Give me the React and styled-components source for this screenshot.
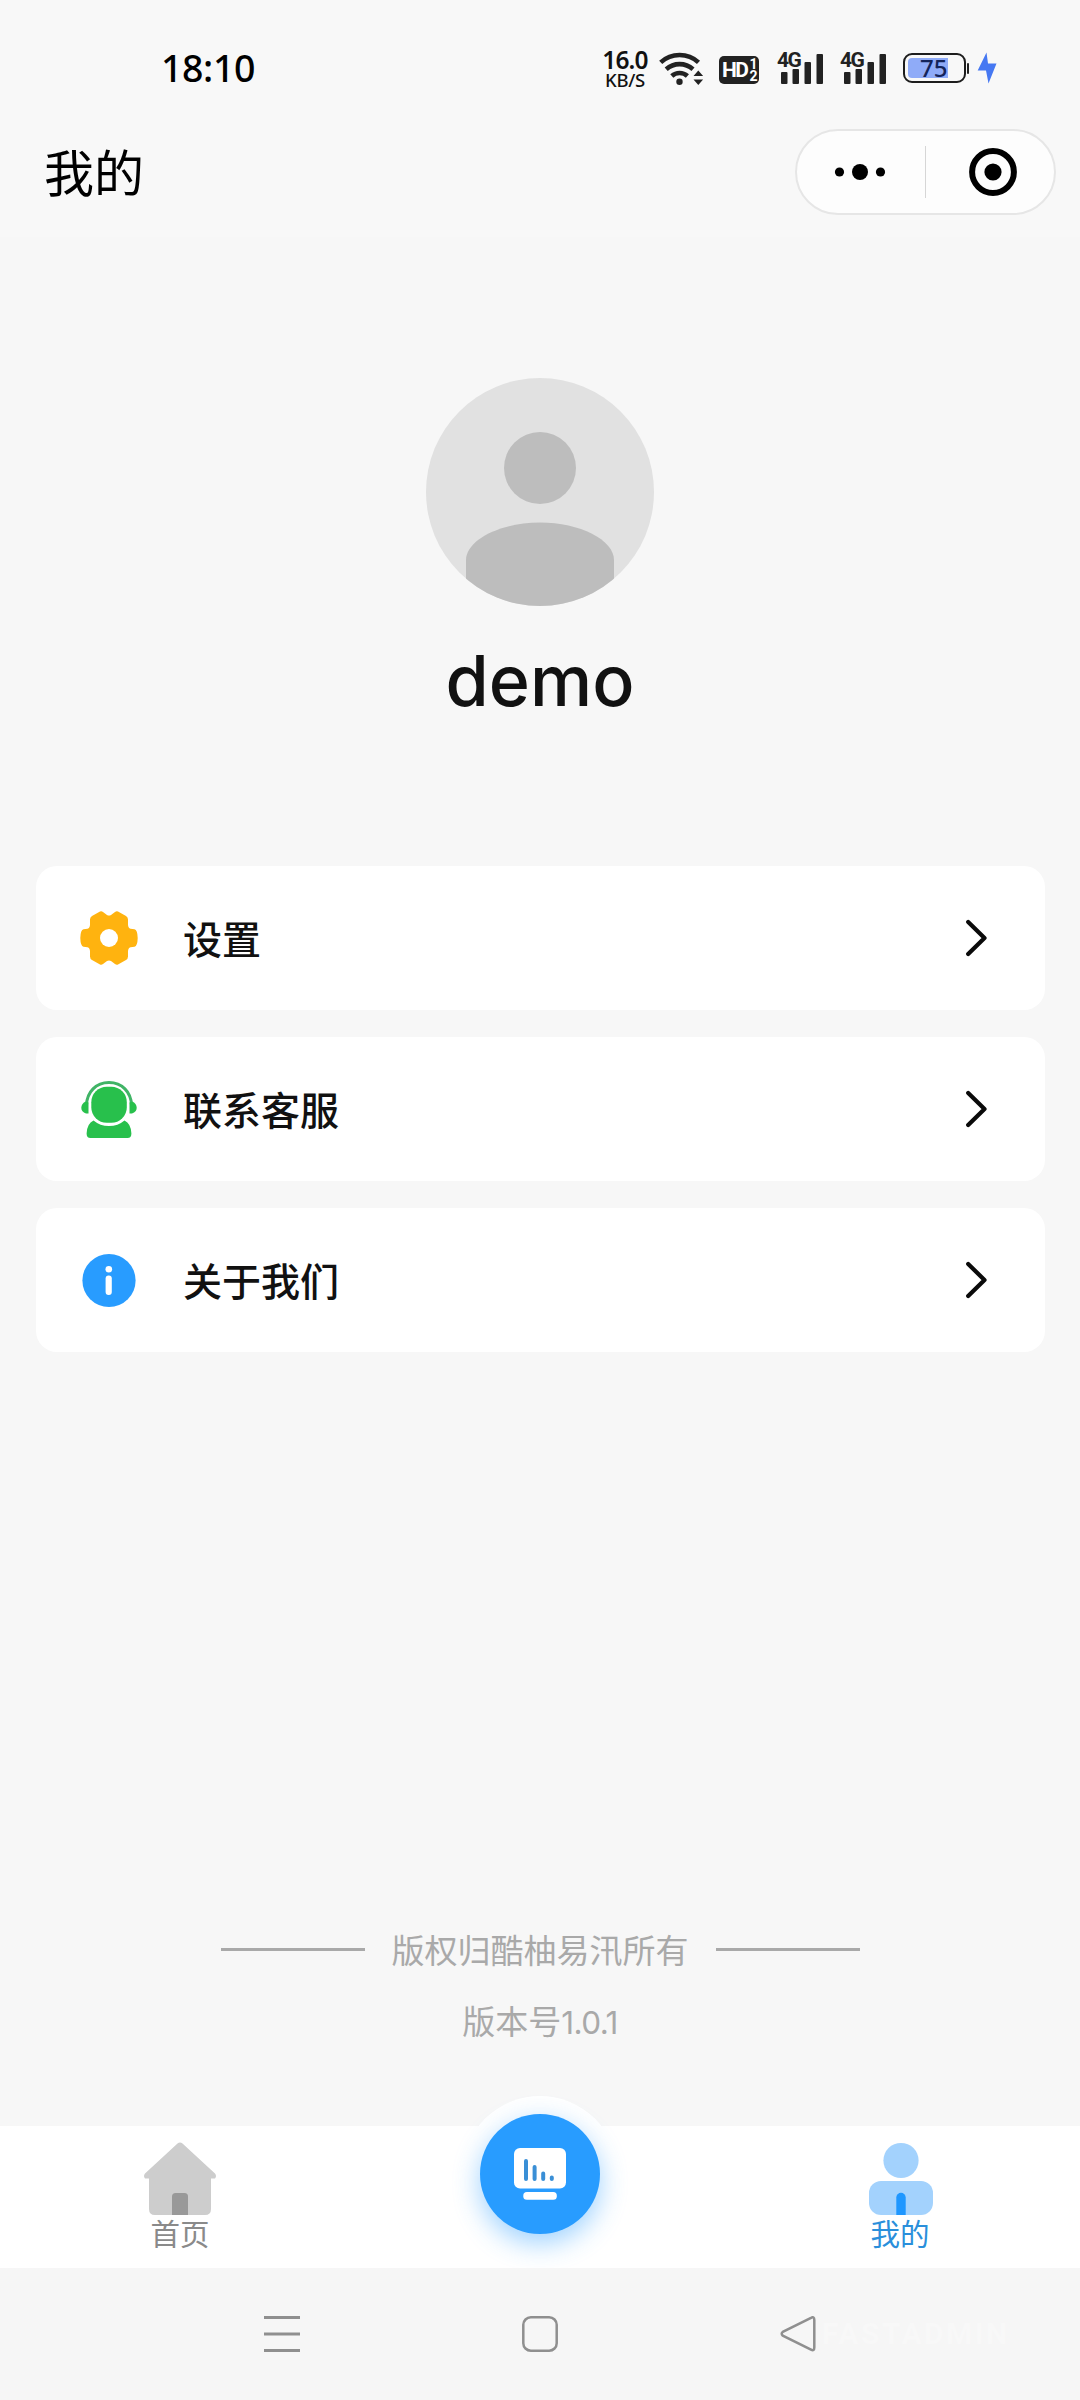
import React from "react";
import styled, { createGlobalStyle } from "styled-components";

const GlobalStyle = createGlobalStyle`
  body {
    margin: 0;
    background: #f7f7f7;
    font-family: "Noto Sans", "Noto Sans CJK SC", sans-serif;
    color: #111;
  }
  svg {
    display: block;
    flex: none;
  }
`;

const WifiIcon = () => (
  <svg width="46" height="36" viewBox="0 0 46 36" fill="none" stroke="#222" strokeWidth="4.6">
    <path d="M1.7 12.4a28 28 0 0 1 37.8 0" />
    <path d="M7.2 19.3a20 20 0 0 1 26.8 0" />
    <path d="M12.8 26a11.600 11.600 0 0 1 15.6 0" />
    <circle cx="20.500" cy="31.700" r="3.200" fill="#222" stroke="none" />
    <path d="M34.500 26l4.800-5.500 4.800 5.500zM34.500 29.500h9.600l-4.800 5.500z" fill="#222" stroke="none" />
  </svg>
);

const Signal = () => (
  <SignalBox>
    <SignalLabel>4G</SignalLabel>
    <svg width="48" height="34" viewBox="0 0 48 34" fill="#222">
      <rect x="4" y="21" width="6.500" height="12" rx="1" />
      <rect x="15.500" y="18" width="6.500" height="15" rx="1" />
      <rect x="27.500" y="11" width="6.500" height="22" rx="1" />
      <rect x="39.500" y="3" width="6.500" height="30" rx="1" />
    </svg>
  </SignalBox>
);

const BoltIcon = () => (
  <svg width="20" height="32" viewBox="0 0 20 32" fill="#4678f2">
    <path d="M9.500 0.500L0.700 18.500h8.300L11.500 31.500 19.500 11.500h-8.500z" />
  </svg>
);

const GearIcon = () => (
  <svg width="60" height="60" viewBox="0 0 60 60">
    <path
      d="M21 3.500Q22.500 2.900 24 3.900L28 6.900Q30 8.100 32 6.900L36 3.900Q37.500 2.900 39 3.500L47 8Q49 9.200 49 11.500V16.500Q49 20 51.500 20.800L55.500 21.300Q58.500 22 58.700 30Q58.500 38 55.500 38.700L51.500 39.200Q49 40 49 43.500V48.500Q49 50.800 47 52L39 56.500Q37.500 57.100 36 56.100L32 53.100Q30 51.900 28 53.100L24 56.100Q22.500 57.100 21 56.500L13 52Q11 50.800 11 48.500V43.500Q11 40 8.500 39.200L4.500 38.700Q1.500 38 1.300 30Q1.500 22 4.500 21.300L8.500 20.800Q11 20 11 16.500V11.500Q11 9.200 13 8Z"
      fill="#ffb30f"
    />
    <circle cx="30" cy="30" r="9" fill="#fff" />
  </svg>
);

const ServiceIcon = () => (
  <svg width="60" height="60" viewBox="0 0 60 60" fill="#28c04c">
    <path d="M7.500 26C8 13 17 3.500 30 3.500S52 13 52.500 26" fill="none" stroke="#40b466" strokeWidth="3" />
    <path d="M9.500 23.500v11H7Q2.300 33 2.300 28.800 2.300 25 6.500 22.500z" />
    <path d="M50.500 23.500v11H53Q57.700 33 57.700 28.800 57.700 25 53.500 22.500z" />
    <rect x="12.300" y="7.700" width="35.500" height="36" rx="15.500" />
    <path d="M14.500 41.500Q21 47 30 47T45.500 41.500Q52 44.500 52.400 54.500 52.400 59 48.500 59H11.500Q7.600 59 7.600 54.500 8 44.500 14.500 41.500z" />
  </svg>
);

const InfoIcon = () => (
  <svg width="60" height="60" viewBox="0 0 60 60">
    <circle cx="30" cy="30.500" r="26.600" fill="#289cff" />
    <circle cx="29.800" cy="19.200" r="3.300" fill="#fff" />
    <rect x="26.600" y="25.500" width="6.200" height="19.500" rx="3" fill="#fff" />
  </svg>
);

const Chevron = () => (
  <svg width="22" height="40" viewBox="0 0 22 40" fill="none" stroke="#0a0a0a" strokeWidth="4.200" strokeLinecap="round" strokeLinejoin="round">
    <path d="M2.200 4L18.500 20 2.200 36" />
  </svg>
);

const HomeIcon = () => (
  <svg width="72" height="76" viewBox="0 0 72 76">
    <path
      d="M33.500 3.500Q36 1.500 38.500 3.500L71 33.500Q73 36 71 38.500H67V69Q67 75 61 75H11Q5 75 5 69V38.500H1Q-1 36 1 33.500Z"
      fill="#cdcdcd"
    />
    <path d="M28 75V56.500Q28 53 31.500 53H40.500Q44 53 44 56.500V75z" fill="#999" />
  </svg>
);

const MineIcon = () => (
  <svg width="72" height="76" viewBox="0 0 72 76">
    <circle cx="37" cy="20.500" r="17.600" fill="#a3d2fd" />
    <rect x="5" y="41" width="64" height="34" rx="12" fill="#a3d2fd" />
    <path d="M32.300 75V57.500a4.700 4.700 0 0 1 9.400 0V75z" fill="#1f97ff" />
  </svg>
);

const ChartIcon = () => (
  <svg width="52" height="52" viewBox="0 0 52 52" fill="#fff">
    <rect width="52" height="40.500" rx="6" />
    <rect x="9.300" y="44" width="33.500" height="7.800" rx="3.500" />
    <g stroke="#3a8fd6" strokeWidth="4" strokeLinecap="round">
      <path d="M12 13v18M20.600 19v12M29.200 25.500v5.500M37.800 29.500v1.500" />
    </g>
  </svg>
);

const menus = [
  { title: "设置", Icon: GearIcon },
  { title: "联系客服", Icon: ServiceIcon },
  { title: "关于我们", Icon: InfoIcon },
];

export default function App() {
  return (
    <Page>
      <GlobalStyle />
      <StatusBar>
        <Clock>18:10</Clock>
        <Speed>
          <b>16.0</b>
          <span>KB/S</span>
        </Speed>
        <WifiIcon />
        <HdBadge>
          HD
          <HdLines>
            <span>1</span>
            <span>2</span>
          </HdLines>
        </HdBadge>
        <Signal />
        <Signal />
        <Battery>
          <BatteryLevel />
          <BatteryText>75</BatteryText>
        </Battery>
        <BatteryNub />
        <BoltIcon />
      </StatusBar>

      <Header>
        <Title>我的</Title>
        <Capsule>
          <CapsuleButton $pad="0 2px 0 0">
            <svg width="52" height="20" viewBox="0 0 52 20">
              <circle cx="5.500" cy="10" r="4.600" />
              <circle cx="26" cy="10" r="8" />
              <circle cx="46.500" cy="10" r="4.600" />
            </svg>
          </CapsuleButton>
          <CapsuleLine />
          <CapsuleButton $pad="0 0 0 6px">
            <svg width="50" height="50" viewBox="0 0 50 50">
              <circle cx="25" cy="25" r="20.900" fill="none" stroke="#000" strokeWidth="6" />
              <circle cx="25" cy="25" r="8.600" />
            </svg>
          </CapsuleButton>
        </Capsule>
      </Header>

      <Profile>
        <Avatar>
          <svg width="228" height="228" viewBox="0 0 228 228" fill="#bdbdbd">
            <circle cx="114" cy="90" r="36" />
            <path d="M40 228V182C40 162 74 144.500 114 144.500S188 162 188 182V228z" />
          </svg>
        </Avatar>
        <UserName>demo</UserName>
      </Profile>

      <MenuList>
        {menus.map(({ title, Icon }) => (
          <MenuItem key={title}>
            <Icon />
            <MenuTitle>{title}</MenuTitle>
            <Chevron />
          </MenuItem>
        ))}
      </MenuList>

      <Footer>
        <Copyright>
          <span>版权归酷柚易汛所有</span>
        </Copyright>
        <Version>
          版本号<em>1.0.1</em>
        </Version>
      </Footer>

      <TabBar>
        <Bump />
        <Tab>
          <HomeIcon />
          <TabLabel>首页</TabLabel>
        </Tab>
        <Tab>
          <RoundButton>
            <ChartIcon />
          </RoundButton>
        </Tab>
        <Tab>
          <MineIcon />
          <TabLabel $active>我的</TabLabel>
        </Tab>
      </TabBar>

      <NavBar>
        <svg width="36" height="36" viewBox="0 0 36 36" stroke="#8f8f8f" strokeWidth="3">
          <path d="M0 1.500h36M0 18h36M0 34.500h36" />
        </svg>
        <svg width="36" height="36" viewBox="0 0 36 36" fill="none" stroke="#8f8f8f" strokeWidth="2.500">
          <rect x="1.300" y="1.300" width="33.400" height="33.400" rx="7.500" />
        </svg>
        <svg width="36" height="36" viewBox="0 0 36 36" fill="none" stroke="#8f8f8f" strokeWidth="2.500">
          <path d="M31 1.800Q34.300 0 34.300 4V31.500Q34.300 35.500 31 33.700L2.800 19.700Q0.600 17.800 2.800 15.900Z" />
        </svg>
        <Watermark>FASTADMIN</Watermark>
      </NavBar>
    </Page>
  );
}

const Page = styled.div`
  width: 1080px;
  height: 2400px;
  display: flex;
  flex-direction: column;
  overflow: hidden;
  background: #f7f7f7;
`;

const StatusBar = styled.div`
  height: 108px;
  box-sizing: border-box;
  padding: 28px 83px 0 161px;
  display: flex;
  align-items: center;
  background: #f8f8f8;
`;

const Clock = styled.div`
  flex: 1;
  padding-bottom: 1px;
  font-size: 37.500px;
  font-weight: 500;
  line-height: 40px;
  letter-spacing: -0.400px;
  color: #000;
`;

const Speed = styled.div`
  width: 50px;
  margin-right: 9px;
  padding-top: 2px;
  display: flex;
  flex-direction: column;
  align-items: center;
  color: #111;
  b {
    font-size: 24.500px;
    font-weight: 600;
    line-height: 20px;
    letter-spacing: -0.8px;
  }
  span {
    font-size: 18.500px;
    font-weight: 500;
    line-height: 19px;
    letter-spacing: -0.3px;
  }
`;

const HdBadge = styled.div`
  width: 40px;
  height: 28px;
  margin: 4px 18px 0 14px;
  border-radius: 5px;
  background: #222;
  color: #fff;
  display: flex;
  align-items: center;
  justify-content: center;
  font: 700 21px/28px "Roboto", sans-serif;
  letter-spacing: -1.500px;
`;

const HdLines = styled.div`
  display: flex;
  flex-direction: column;
  margin-left: 2px;
  font-size: 14px;
  line-height: 12px;
`;

const SignalBox = styled.div`
  position: relative;
  width: 48px;
  margin-right: 15px;
`;

const SignalLabel = styled.span`
  position: absolute;
  left: 0;
  top: -1px;
  font: 700 21px/20px "Roboto", sans-serif;
  letter-spacing: -1.500px;
  color: #222;
  text-shadow: 0 0 2px #f8f8f8, 0 0 2px #f8f8f8;
`;

const Battery = styled.div`
  position: relative;
  width: 63px;
  height: 30px;
  box-sizing: border-box;
  padding: 3px;
  border: 2.500px solid #1d1d1d;
  border-radius: 9px;
`;

const BatteryLevel = styled.div`
  width: 40px;
  height: 20px;
  border-radius: 4px 0 0 4px;
  background: #8fabf8;
`;

const BatteryText = styled.span`
  position: absolute;
  left: 15px;
  top: 0;
  font-size: 24px;
  font-weight: 500;
  line-height: 26px;
  color: #14245a;
`;

const BatteryNub = styled.div`
  width: 2px;
  height: 11px;
  margin: 0 8px 0 1px;
  border-radius: 1px;
  background: #222;
`;

const Header = styled.div`
  height: 129px;
  box-sizing: border-box;
  padding: 0 24px 0 44px;
  display: flex;
  align-items: center;
  justify-content: space-between;
  background: #f8f8f8;
`;

const Title = styled.div`
  font-size: 50px;
  line-height: 60px;
  color: #000;
`;

const Capsule = styled.div`
  width: 261px;
  height: 86px;
  box-sizing: border-box;
  margin-bottom: 1px;
  border: 2px solid #e6e6e6;
  border-radius: 43px;
  background: #fdfdfd;
  display: flex;
  align-items: center;
`;

const CapsuleButton = styled.div`
  flex: none;
  width: 128px;
  box-sizing: border-box;
  padding: ${({ $pad }) => $pad};
  display: flex;
  justify-content: center;
`;

const CapsuleLine = styled.div`
  flex: none;
  width: 1px;
  height: 52px;
  background: #d6d6d6;
`;

const Profile = styled.div`
  height: 629px;
  box-sizing: border-box;
  padding-top: 141px;
  display: flex;
  flex-direction: column;
  align-items: center;
`;

const Avatar = styled.div`
  width: 228px;
  height: 228px;
  border-radius: 50%;
  overflow: hidden;
  background: #e1e1e1;
`;

const UserName = styled.div`
  margin-top: 33px;
  font: 500 70px/84px "Inter", sans-serif;
`;

const MenuList = styled.div`
  padding: 0 35px 0 36px;
  display: flex;
  flex-direction: column;
  gap: 27px;
`;

const MenuItem = styled.div`
  height: 144px;
  box-sizing: border-box;
  padding: 0 57px 0 43px;
  border-radius: 21px;
  background: #fff;
  display: flex;
  align-items: center;
`;

const MenuTitle = styled.div`
  flex: 1;
  padding: 0 0 2px 44px;
  font-size: 39px;
  font-weight: 500;
`;

const Footer = styled.div`
  margin-top: auto;
  height: 202px;
  display: flex;
  flex-direction: column;
  align-items: center;
  color: #a9a9a9;
  font-size: 33px;
  line-height: 50px;
`;

const Copyright = styled.div`
  display: flex;
  align-items: center;
  gap: 27px;
  span {
    padding-top: 2px;
    margin-bottom: -2px;
  }
  &::before,
  &::after {
    content: "";
    width: 144px;
    height: 3px;
    background: #a9a9a9;
  }
`;

const Version = styled.div`
  margin-top: 23px;
  em {
    font-family: "Inter", sans-serif;
    font-size: 31.500px;
    font-style: normal;
    letter-spacing: -0.600px;
  }
`;

const TabBar = styled.div`
  position: relative;
  height: 142px;
  display: flex;
  background: #fff;
`;

// white circle behind the round button, sticks out above the bar
const Bump = styled.div`
  position: absolute;
  left: 462px;
  top: -30px;
  width: 156px;
  height: 156px;
  border-radius: 50%;
  background: #fff;
`;

const Tab = styled.div`
  position: relative;
  flex: 1;
  display: flex;
  flex-direction: column;
  align-items: center;
  padding-top: 14px;
`;

const TabLabel = styled.div`
  font-size: 29.500px;
  line-height: 36px;
  color: ${({ $active }) => ($active ? "#2a8fdb" : "#8a8a8a")};
`;

const RoundButton = styled.div`
  width: 120px;
  height: 120px;
  margin-top: -26px;
  border-radius: 50%;
  background: #289cff;
  box-shadow: 0 9px 27px rgba(40, 156, 255, 0.45);
  display: flex;
  align-items: center;
  justify-content: center;
`;

const NavBar = styled.div`
  position: relative;
  height: 132px;
  display: flex;
  align-items: center;
  justify-content: center;
  gap: 222px;
  background: #f6f6f6;
`;

const Watermark = styled.div`
  position: absolute;
  left: 822px;
  top: 48px;
  font: 700 30px/36px "Roboto", sans-serif;
  letter-spacing: 2.500px;
  color: #f8f8f8;
`;
